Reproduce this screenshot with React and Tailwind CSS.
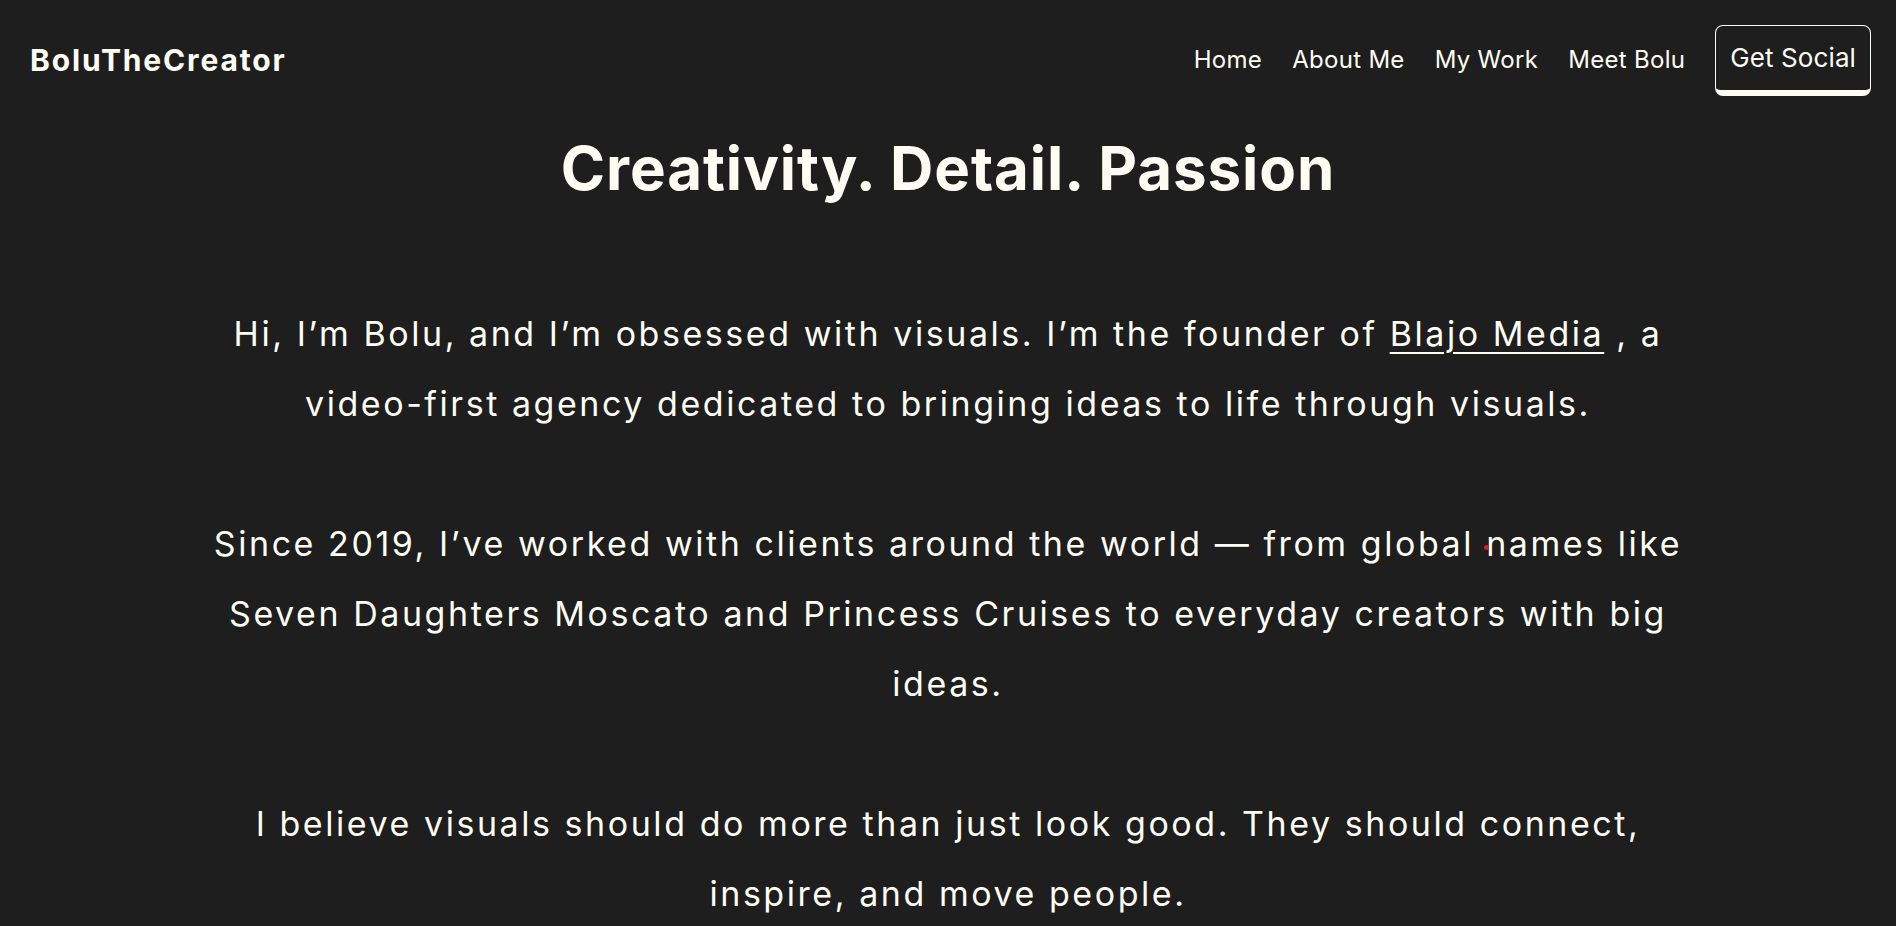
const navLinks = ['Home', 'About Me', 'My Work', 'Meet Bolu']

export default function App() {
  return (
    <div
      className="relative min-h-[926px] bg-[#1e1e1e] text-[#fdfcf3]"
      style={{ fontFamily: 'Inter, "Open Sans", sans-serif' }}
    >
      <header className="flex h-[120px] items-center justify-between pl-[30px] pr-[25px]">
        <a href="#" className="text-[30px] font-bold tracking-[1.85px]">
          BoluTheCreator
        </a>
        <nav className="flex items-center gap-[30px]">
          {navLinks.map((link) => (
            <a key={link} href="#" className="text-[24px] tracking-[0.3px]">
              {link}
            </a>
          ))}
          <a
            href="#"
            className="flex h-[71px] items-center rounded-[8px] border border-b-[6px] border-[#fdfcf3] px-[14px] text-[26px] tracking-[0.1px]"
          >
            Get Social
          </a>
        </nav>
      </header>

      <main className="flex flex-col items-center">
        <h1 className="mt-[12px] text-[60px] font-bold leading-[72px] tracking-[0.9px]">
          Creativity. Detail. Passion
        </h1>

        <div className="mt-[95px] flex flex-col gap-[70px] text-center text-[34px] leading-[70px] tracking-[2.55px]">
          <p>
            Hi, I’m Bolu, and I’m obsessed with visuals. I’m the founder of{' '}
            <a href="#" className="underline decoration-2 underline-offset-[6px]">
              Blajo Media
            </a>{' '}
            , a
            <br />
            video-first agency dedicated to bringing ideas to life through visuals.
          </p>
          <p>
            Since 2019, I’ve worked with clients around the world — from global names like
            <br />
            Seven Daughters Moscato and Princess Cruises to everyday creators with big
            <br />
            ideas.
          </p>
          <p>
            I believe visuals should do more than just look good. They should connect,
            <br />
            inspire, and move people.
          </p>
        </div>
      </main>

      <span className="absolute left-[1484px] top-[545px] h-[5px] w-[5px] rounded-full bg-[#e11d1d]" />
    </div>
  )
}
